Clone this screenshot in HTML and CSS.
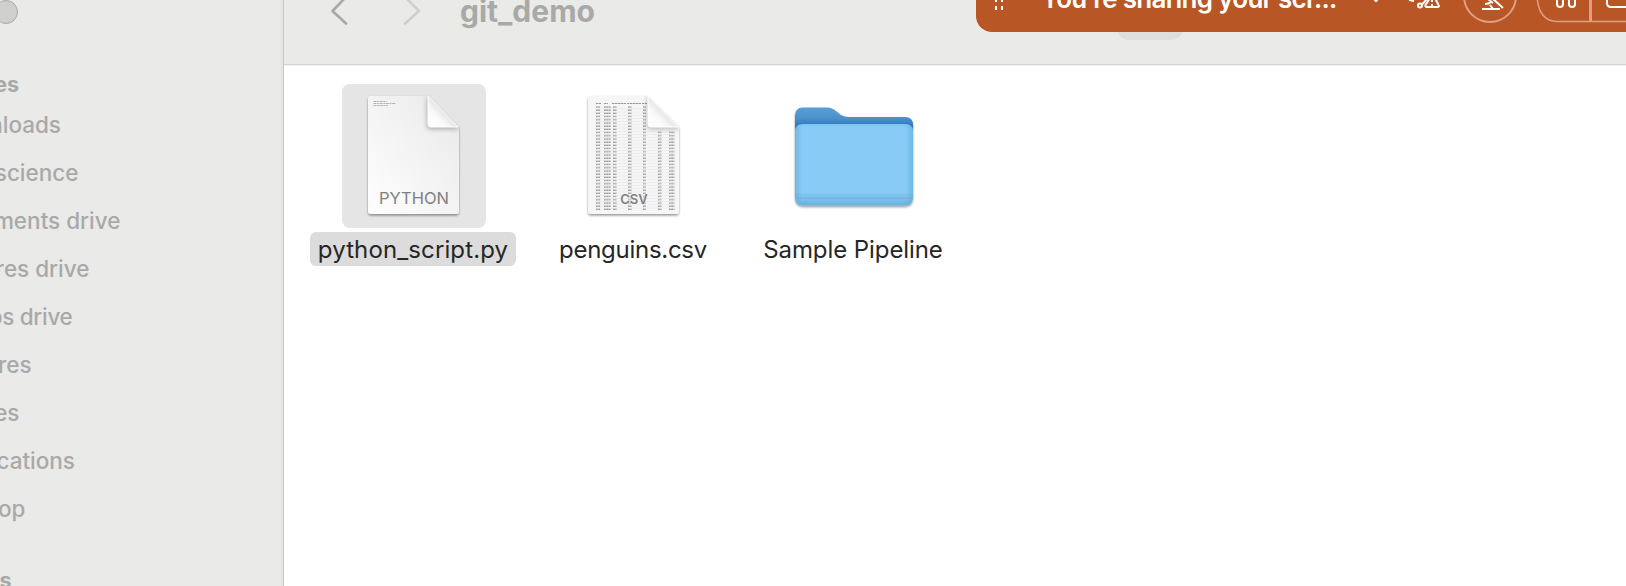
FILE: index.html
```html
<!DOCTYPE html>
<html lang="en">
<head>
<meta charset="utf-8">
<title>git_demo</title>
<link rel="stylesheet" href="styles.css">
</head>
<body>
<div class="window">
  <aside class="sidebar">
    <span class="light"></span>
    <h2 class="head favorites">es</h2>
    <ul class="places">
      <li><span style="width:61px">nloads</span></li>
      <li><span style="width:78.5px">science</span></li>
      <li><span style="width:120.5px">ments drive</span></li>
      <li><span style="width:89.5px">res drive</span></li>
      <li><span class="tight" style="width:72.5px">os drive</span></li>
      <li><span style="width:31.5px">res</span></li>
      <li><span style="width:19.5px">es</span></li>
      <li><span style="width:75px">cations</span></li>
      <li><span style="width:25.5px">op</span></li>
    </ul>
    <h2 class="head next">s</h2>
  </aside>
  <main class="main">
    <header class="toolbar">
      <svg class="nav" width="96" height="28" viewBox="0 0 96 28" fill="none" stroke-width="2.6" stroke-linecap="round" stroke-linejoin="round">
        <path d="M16 -3L2.500 11L16 23.500" stroke="#a8a8a7"/>
        <path d="M75 -3L89 11L75 23.500" stroke="#cfcfce"/>
      </svg>
      <h1 class="title">git_demo</h1>
    </header>
    <section class="files">
      <figure class="file selected">
        <div class="thumb">
          <svg width="144" height="144" viewBox="0 0 144 144">
            <defs>
              <linearGradient id="page" x1="1" y1="0" x2="0" y2="1"><stop offset="0" stop-color="#e9e9e9"/><stop offset="1" stop-color="#fefefe"/></linearGradient>
              <linearGradient id="fold" x1="0" y1="1" x2=".6" y2=".4"><stop offset="0" stop-color="#fff"/><stop offset=".5" stop-color="#fafafa"/><stop offset="1" stop-color="#dcdcdc"/></linearGradient>
              <filter id="drop" x="-20%" y="-20%" width="140%" height="140%"><feDropShadow dx="0" dy="1.500" stdDeviation="1.300" flood-opacity=".42"/></filter>
              <filter id="soft" x="-50%" y="-50%" width="200%" height="200%"><feGaussianBlur stdDeviation="2.500"/></filter>
              <clipPath id="sheet"><path id="outline" d="M29 12H86L117 43V127Q117 130 114 130H29Q26 130 26 127V15Q26 12 29 12Z"/></clipPath>
            </defs>
            <use href="#outline" fill="url(#page)" filter="url(#drop)"/>
            <g clip-path="url(#sheet)"><path d="M85 14V41Q85 45 89 45H118L86 12Z" fill="#777" opacity=".6" filter="url(#soft)"/></g>
            <path d="M86 12V40Q86 43 89 43H116Z" fill="url(#fold)" stroke="#fff" stroke-width="1"/>
            <path d="M31.500 17.500h13M31.500 19.500h22.500M31.500 21.500h14.500" stroke="#999" stroke-width=".7" stroke-dasharray="3 .7 2 .5"/>
          </svg>
          <span class="kind">PYTHON</span>
        </div>
        <figcaption class="name n1">python_script.py</figcaption>
      </figure>
      <figure class="file">
        <div class="thumb">
          <svg width="144" height="144" viewBox="0 0 144 144">
            <defs>
              <pattern id="rows" x="0" y="22" width="144" height="3.200" patternUnits="userSpaceOnUse"><path d="M34 1h4.500M42 1h7M51 1h3.500M66 1h3.500M81 1h3M96 1h3.500M107 1h5.500" stroke="#929292" stroke-width="1.050" stroke-dasharray="1.800 .4"/><path d="M33 2.800H113" stroke="#dadada" stroke-width=".4"/></pattern>
            </defs>
            <use href="#outline" fill="#f6f6f6" filter="url(#drop)"/>
            <path d="M33 22H84V46H113V126H33Z" fill="url(#rows)"/>
            <path d="M34 19.500h5M42 19.500h4M50 19.500h14M65 19.500h14M80 19.500h5" stroke="#999" stroke-width="1" stroke-dasharray="2.500 .5"/>
            <g clip-path="url(#sheet)"><path d="M85 14V41Q85 45 89 45H118L86 12Z" fill="#777" opacity=".5" filter="url(#soft)"/></g>
            <path d="M86 12V40Q86 43 89 43H116Z" fill="url(#fold)" stroke="#fff" stroke-width="1"/>
          </svg>
          <span class="kind csv">CSV</span>
        </div>
        <figcaption class="name n2">penguins.csv</figcaption>
      </figure>
      <figure class="file">
        <div class="thumb">
          <svg width="144" height="144" viewBox="-2 0 144 144">
            <defs>
              <linearGradient id="back" x1="0" y1="0" x2="0" y2="1"><stop offset="0" stop-color="#5b9fd2"/><stop offset=".12" stop-color="#4a92cc"/><stop offset=".2" stop-color="#3577c0"/></linearGradient>
              <linearGradient id="front" x1="0" y1="0" x2="0" y2="1"><stop offset="0" stop-color="#80c5f2"/><stop offset=".05" stop-color="#88cbf7"/><stop offset=".84" stop-color="#88cbf6"/><stop offset=".87" stop-color="#7bbfea"/><stop offset=".885" stop-color="#82c6f1"/><stop offset=".91" stop-color="#70b5e1"/><stop offset=".93" stop-color="#7bc0ec"/><stop offset="1" stop-color="#68afdd"/></linearGradient>
              <linearGradient id="edge"><stop offset="0" stop-color="#5aa6d8" stop-opacity=".55"/><stop offset=".06" stop-color="#5aa6d8" stop-opacity="0"/><stop offset=".94" stop-color="#5aa6d8" stop-opacity="0"/><stop offset="1" stop-color="#5aa6d8" stop-opacity=".55"/></linearGradient>
            </defs>
            <g filter="url(#drop)">
              <path d="M11 112V32Q11 23.500 19 23.500H43Q48 23.500 52 27L57 31Q60 33 65 33H121Q129 33 129 41V112Z" fill="url(#back)"/>
              <path d="M19 40H121Q129 40 129 48V113Q129 121.500 121 121.500H19Q11 121.500 11 113V48Q11 40 19 40Z" fill="url(#front)"/>
            </g>
            <path d="M19 40H121Q129 40 129 48V113Q129 121.500 121 121.500H19Q11 121.500 11 113V48Q11 40 19 40Z" fill="url(#edge)"/>
          </svg>
        </div>
        <figcaption class="name n3">Sample Pipeline</figcaption>
      </figure>
    </section>
  </main>
  <span class="tool"></span>
  <div class="banner">
    <span class="message">You’re sharing your scr...</span>
    <svg class="controls" width="650" height="32" viewBox="976 0 650 32" fill="none" stroke="#fff" stroke-width="2">
      <path d="M995 0h2v2h-2zM1001 0h2v2h-2zM995 6h2v4h-2zM1001 6h2v4h-2z" fill="#fff" stroke="none"/>
      <path d="M1374 -1L1376 1L1378 -1"/>
      <path d="M1409 0l5 1M1422.500 4l4.500 -5" stroke-width="2"/>
      <circle cx="1420" cy="5.500" r="2"/>
      <path d="M1430 -2L1425.500 5Q1425 7 1427 7H1437Q1440 7 1438.500 5L1435 -2M1432 0v2M1432 4v2"/>
      <circle cx="1490" cy="-4" r="26" stroke="#dda085" stroke-width="2"/>
      <path d="M1482 9H1500M1485 4Q1489 4 1491 2M1490 5L1493 9M1488 -1L1493 3M1492 -2L1503 8"/>
      <path d="M1537 -5Q1538 21 1557 21.500H1626" stroke="#dda085" stroke-width="1.500"/>
      <path d="M1590.500 0V22" stroke="#dda085" stroke-width="3"/>
      <path d="M1557 -2V4Q1557 7 1560 7Q1563 7 1563 4V-2M1569 -2V4Q1569 7 1572 7Q1575 7 1575 4V-2M1607 -2V3Q1607 7 1611 7H1626"/>
    </svg>
  </div>
</div>
</body>
</html>
```

FILE: styles.css
```css
* { box-sizing: border-box; }
body { margin: 0; font-family: Inter, "Liberation Sans", sans-serif; background: #fff; overflow: hidden; }
.window { position: relative; display: flex; width: 1626px; height: 586px; overflow: hidden; }
.sidebar { flex: 0 0 284px; display: flex; flex-direction: column; background: linear-gradient(90deg, #eaeae8 280px, #e0e0de 283px, #c9c9c8 283px); color: #a9a9a8; overflow: hidden; }
.light { flex: none; width: 24px; height: 24px; margin-left: -6px; border: 1px solid #a9a9a8; border-radius: 50%; background: #d0d0cf; }
.head { flex: none; display: flex; justify-content: flex-end; margin: 0; font-size: 21.500px; line-height: 28px; font-weight: 700; white-space: nowrap; }
.favorites { width: 19px; margin-top: 46px; }
.next { width: 11.500px; margin-top: 33px; }
.places { margin: 2.500px 0 0; padding: 0; list-style: none; }
.places li { height: 48px; font-size: 22.500px; line-height: 48px; font-weight: 500; }
.places span { display: flex; justify-content: flex-end; white-space: nowrap; }
.places .tight { letter-spacing: -.3px; }
.main { flex: 1; display: flex; flex-direction: column; }
.toolbar { flex: none; height: 66px; display: flex; align-items: flex-start; padding-left: 46px; background: #eaeae8; border-bottom: 1px solid #f3f3f3; box-shadow: inset 0 -1px #d4d4d3; }
.nav { flex: none; }
.title { margin: -8px 0 0 34px; font-size: 30px; line-height: 38px; font-weight: 700; color: #a9a9a8; }
.files { display: grid; grid-template-columns: repeat(3, 220px); padding: 18px 0 0 20px; }
.file { margin: 0; display: flex; flex-direction: column; align-items: center; gap: 4px; }
.thumb { display: grid; width: 144px; height: 144px; border-radius: 8px; }
.thumb > * { grid-area: 1 / 1; }
.selected .thumb { background: #e5e5e5; }
.kind { align-self: end; justify-self: center; margin: 0 0 19px; font-size: 16.500px; line-height: 22px; color: #808080; }
.csv { font-size: 13px; font-weight: 600; margin-bottom: 18px; text-shadow: 0 0 2px #f6f6f6, 0 0 2px #f6f6f6; }
.name { height: 34px; padding: 1px 8px 0; border-radius: 6px; font-size: 24px; line-height: 34px; color: #262626; white-space: nowrap; }
.n1 { letter-spacing: .12px; margin-left: -2px; }
.n2 { letter-spacing: -.27px; margin-left: -2px; }
.n3 { letter-spacing: -.08px; margin-left: -2px; }
.selected .name { background: #dcdcdc; }
.tool { position: absolute; left: 1117px; top: 0; width: 66px; height: 40px; border-radius: 12px; background: #dededd; }
.banner { position: absolute; left: 976px; top: 0; width: 650px; height: 32px; border-bottom-left-radius: 16px; background: #b95626; overflow: hidden; }
.message { position: absolute; left: 65px; top: -18px; font-size: 26px; line-height: 34px; font-weight: 600; letter-spacing: -.72px; color: #fff; white-space: nowrap; }
.controls { position: absolute; left: 0; top: 0; }
```
